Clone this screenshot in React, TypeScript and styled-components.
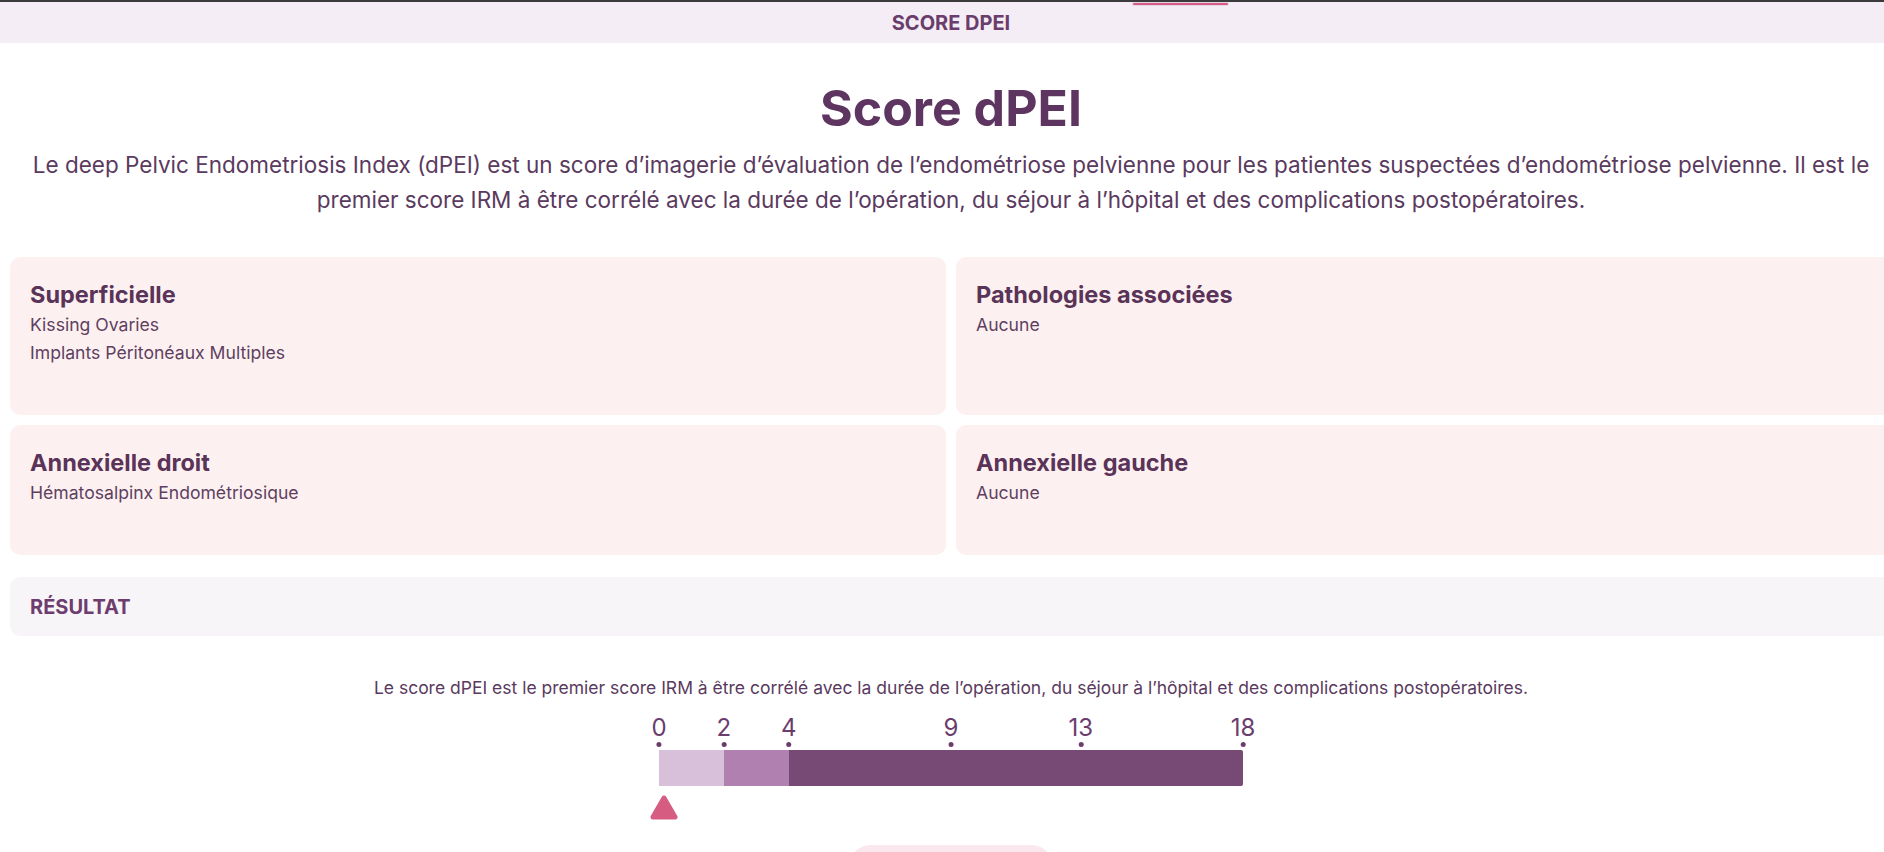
import React from 'react';

import styled, { createGlobalStyle } from 'styled-components';

const GlobalStyle = createGlobalStyle`
  html,
  body {
    margin: 0;
    padding: 0;
    overflow-x: hidden;
    background: #ffffff;
    font-family: Inter, 'Noto Sans', sans-serif;
  }
`;

const Header = styled.header`
  position: relative;
  height: 41px;
  border-top: 2px solid #3a3a3a;
  background: #f4edf5;
  display: flex;
  align-items: center;
  justify-content: center;
  width: 1902px;
`;

const TabIndicator = styled.span`
  position: absolute;
  top: 1px;
  left: 1133px;
  width: 95px;
  height: 2px;
  border-radius: 1px;
  background: #d65c82;
  box-shadow: 0 0 0 1px rgba(200, 170, 205, 0.35);
`;

const HeaderTitle = styled.span`
  font-size: 20px;
  font-weight: 700;
  color: #6a3d6c;
  text-transform: uppercase;
`;

const Page = styled.main`
  width: 1902px;
  box-sizing: border-box;
  padding: 0 10px;
`;

const Title = styled.h1`
  margin: 36px 0 0;
  font-size: 50px;
  line-height: 58px;
  font-weight: 700;
  text-align: center;
  color: #5e3560;
`;

const Intro = styled.p`
  margin: 10px 0 0;
  font-size: 22.5px;
  line-height: 35px;
  text-align: center;
  color: #5a3a5e;
`;

const CardGrid = styled.section`
  margin-top: 40px;
  display: grid;
  grid-template-columns: 1fr 1fr;
  gap: 10px;
`;

const Card = styled.div`
  padding: 22px 20px 48px;
  border-radius: 10px;
  background: #fdf0f1;
`;

const CardTitle = styled.h3`
  margin: 0;
  font-size: 23.5px;
  line-height: 32px;
  font-weight: 700;
  color: #5a3358;
`;

const CardItem = styled.div`
  font-size: 17.6px;
  line-height: 28px;
  color: #5e3f60;
`;

const ResultBar = styled.div`
  margin-top: 22px;
  height: 59px;
  padding: 0 20px;
  display: flex;
  align-items: center;
  border-radius: 10px;
  background: #f8f5f9;
`;

const ResultTitle = styled.h4`
  margin: 0;
  font-size: 20px;
  font-weight: 700;
  text-transform: uppercase;
  color: #6e3d70;
`;

const ResultText = styled.p`
  margin: 40px 0 0;
  font-size: 17.5px;
  line-height: 24px;
  text-align: center;
  color: #5a3a5e;
`;

const Scale = styled.div`
  width: 584px;
  margin: 15px auto 0;
`;

const TickRow = styled.div`
  position: relative;
  height: 35px;
`;

const Tick = styled.div`
  position: absolute;
  top: 0;
  transform: translateX(-50%);
  display: flex;
  flex-direction: column;
  align-items: center;
`;

const TickLabel = styled.span`
  font-size: 24px;
  line-height: 26px;
  color: #6b3d6d;
`;

const TickDot = styled.span`
  margin-top: 1px;
  width: 5px;
  height: 5px;
  border-radius: 50%;
  background: #6b3d6d;
`;

const Bar = styled.div`
  display: flex;
  height: 36px;
  overflow: hidden;
  border-radius: 0 2px 2px 0;
`;

const Segment = styled.div<{ $color: string }>`
  background: ${(p) => p.$color};
`;

const PointerRow = styled.div`
  margin-top: 9px;
  height: 25px;
`;

const Pointer = styled.svg`
  display: block;
  width: 28px;
  height: 25px;
`;

const ActionButton = styled.button`
  display: block;
  margin: 25px auto 0;
  width: 206px;
  height: 46px;
  border: none;
  border-radius: 23px;
  background: #fbe7ee;
`;

const MAX = 18;
const ticks = [0, 2, 4, 9, 13, 18];
const segments = [
  { from: 0, to: 2, color: '#d9c0da' },
  { from: 2, to: 4, color: '#b081b0' },
  { from: 4, to: 18, color: '#774a76' }
];
const score = 0;

const cards = [
  { title: 'Superficielle', items: ['Kissing Ovaries', 'Implants Péritonéaux Multiples'] },
  { title: 'Pathologies associées', items: ['Aucune'] },
  { title: 'Annexielle droit', items: ['Hématosalpinx Endométriosique'] },
  { title: 'Annexielle gauche', items: ['Aucune'] }
];

export default function App() {
  const pct = (v: number) => `${(v / MAX) * 100}%`;

  return (
    <>
      <GlobalStyle />
      <Header>
        <TabIndicator />
        <HeaderTitle>Score dPEI</HeaderTitle>
      </Header>
      <Page>
        <Title>Score dPEI</Title>
        <Intro>
          Le deep Pelvic Endometriosis Index (dPEI) est un score d’imagerie d’évaluation de
          l’endométriose pelvienne pour les patientes suspectées d’endométriose pelvienne. Il est le
          premier score IRM à être corrélé avec la durée de l’opération, du séjour à l’hôpital et des
          complications postopératoires.
        </Intro>

        <CardGrid>
          {cards.map((card) => (
            <Card key={card.title}>
              <CardTitle>{card.title}</CardTitle>
              {card.items.map((item) => (
                <CardItem key={item}>{item}</CardItem>
              ))}
            </Card>
          ))}
        </CardGrid>

        <ResultBar>
          <ResultTitle>Résultat</ResultTitle>
        </ResultBar>

        <ResultText>
          Le score dPEI est le premier score IRM à être corrélé avec la durée de l’opération, du
          séjour à l’hôpital et des complications postopératoires.
        </ResultText>

        <Scale>
          <TickRow>
            {ticks.map((t) => (
              <Tick key={t} style={{ left: pct(t) }}>
                <TickLabel>{t}</TickLabel>
                <TickDot />
              </Tick>
            ))}
          </TickRow>
          <Bar>
            {segments.map((s) => (
              <Segment key={s.from} $color={s.color} style={{ width: pct(s.to - s.from) }} />
            ))}
          </Bar>
          <PointerRow style={{ marginLeft: `calc(${pct(score)} - 9px)` }}>
            <Pointer viewBox="0 0 28 25">
              <polygon
                points="14,3 25,22 3,22"
                fill="#d65c82"
                stroke="#d65c82"
                strokeWidth="5"
                strokeLinejoin="round"
              />
            </Pointer>
          </PointerRow>
        </Scale>

        <ActionButton type="button" aria-label="Action" />
      </Page>
    </>
  );
}
